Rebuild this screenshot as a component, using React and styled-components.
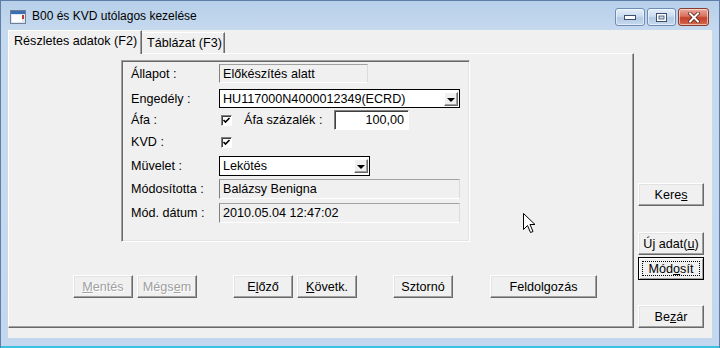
import React from "react";
import styled, { createGlobalStyle } from "styled-components";

const GlobalStyle = createGlobalStyle`
  html, body {
    margin: 0;
    padding: 0;
    background: #c4d9ef;
  }
  body {
    font-family: "Liberation Sans", Arial, sans-serif;
    font-size: 12.6px;
    color: #000;
  }
`;

const Window = styled.div`
  position: relative;
  width: 720px;
  height: 348px;
  box-sizing: border-box;
  background: linear-gradient(180deg, #b7cfe9 0px, #c6daef 30px, #c3d8ee 100%);
  border-left: 1px solid #5f7fa9;
  border-top: 1px solid #5f7fa9;
  border-right: 1px solid #5f7fa9;
  display: flex;
  flex-direction: column;
  overflow: hidden;
`;

const TitleBar = styled.div`
  height: 29px;
  display: flex;
  align-items: flex-start;
  padding-left: 9px;
  box-sizing: border-box;
`;

const AppIcon = styled.svg`
  margin-top: 9px;
  width: 16px;
  height: 14px;
  flex-shrink: 0;
`;

const Title = styled.div`
  margin-top: 8px;
  margin-left: 6px;
  flex: 1;
  font-size: 12px;
  color: #000;
  white-space: nowrap;
`;

const CaptionGroup = styled.div`
  display: flex;
  margin-top: 7px;
  margin-right: 10px;
  gap: 2px;
`;

const CaptionButton = styled.div`
  width: ${(p) => p.$w}px;
  height: 18px;
  box-sizing: border-box;
  border: 1px solid ${(p) => (p.$close ? "#8c3a2c" : "#6e8cb4")};
  border-radius: 3px;
  background: ${(p) =>
    p.$close
      ? "linear-gradient(180deg, #e9a99b 0%, #d7735e 45%, #c4412a 55%, #d26a4f 100%)"
      : "linear-gradient(180deg, #e4eef9 0%, #cbdcef 45%, #b4cae4 55%, #c6d9ee 100%)"};
  box-shadow: inset 0 0 0 1px rgba(255, 255, 255, 0.55);
  display: flex;
  align-items: center;
  justify-content: center;
`;

const Client = styled.div`
  margin: 0 7px;
  height: 308px;
  background: #f0f0f0;
  display: flex;
  flex-shrink: 0;
`;

const TabArea = styled.div`
  width: 626px;
  display: flex;
  flex-direction: column;
`;

const TabStrip = styled.div`
  height: 23px;
  display: flex;
  align-items: flex-end;
  position: relative;
  z-index: 1;
`;

const Tab = styled.div`
  box-sizing: border-box;
  width: ${(p) => p.$w}px;
  height: ${(p) => (p.$active ? 24 : 21)}px;
  margin-bottom: ${(p) => (p.$active ? -1 : 0)}px;
  background: #f0f0f0;
  border-top: 1px solid #fff;
  border-left: ${(p) => (p.$active ? "1px solid #fff" : "none")};
  border-right: 1px solid #696969;
  box-shadow: inset -1px 0 #a0a0a0;
  padding-left: 5px;
  padding-top: 3px;
  white-space: nowrap;
`;

const TabPanel = styled.div`
  height: 275px;
  box-sizing: border-box;
  border-top: 1px solid #fff;
  border-left: 1px solid #fff;
  border-right: 1px solid #696969;
  border-bottom: 1px solid #696969;
  box-shadow: inset -1px -1px #a0a0a0;
  display: flex;
  flex-direction: column;
`;

const GroupBox = styled.div`
  margin: 6px 0 0 112px;
  width: 349px;
  height: 182px;
  box-sizing: border-box;
  border: 1px solid;
  border-color: #a0a0a0 #fff #fff #a0a0a0;
  box-shadow: inset 1px 1px #696969, inset -1px -1px #e3e3e3;
  padding: 3px 0 0 9px;
`;

const Row = styled.div`
  display: flex;
  align-items: center;
  height: ${(p) => p.$h}px;
  margin-top: ${(p) => p.$mt}px;
`;

const Label = styled.div`
  box-sizing: border-box;
  width: ${(p) => p.$w || 88}px;
  padding-left: ${(p) => p.$pl || 0}px;
  flex-shrink: 0;
  white-space: nowrap;
`;

const ReadOnlyBox = styled.div`
  width: ${(p) => p.$w}px;
  height: 100%;
  box-sizing: border-box;
  border: 1px solid;
  border-color: #a0a0a0 #dcdcdc #fff #808080;
  padding-left: 3px;
  display: flex;
  align-items: center;
  white-space: nowrap;
`;

const Combo = styled.div`
  width: ${(p) => p.$w}px;
  height: 100%;
  box-sizing: border-box;
  background: #fff;
  border: 1px solid #000;
  padding-left: 3px;
  display: flex;
  align-items: center;
  justify-content: space-between;
  white-space: nowrap;
`;

const DropButton = styled.div`
  width: 14px;
  height: 14px;
  margin-right: 1px;
  box-sizing: border-box;
  background: #f0f0f0;
  border: 1px solid;
  border-color: #fff #696969 #696969 #fff;
  box-shadow: inset -1px -1px #a0a0a0;
  display: flex;
  align-items: center;
  justify-content: center;
`;

const Arrow = styled.div`
  width: 0;
  height: 0;
  border-left: 4px solid transparent;
  border-right: 4px solid transparent;
  border-top: 4px solid #000;
  margin-top: 2px;
`;

const Check = styled.div`
  width: 11px;
  height: 11px;
  margin-left: 2px;
  box-sizing: border-box;
  background: #fff;
  border: 1px solid;
  border-color: #808080 #fff #fff #808080;
  box-shadow: inset 1px 1px #404040;
  display: flex;
  align-items: center;
  justify-content: center;
  flex-shrink: 0;
`;

const NumberInput = styled.div`
  width: ${(p) => p.$w}px;
  height: 100%;
  box-sizing: border-box;
  background: #fff;
  border: 1px solid;
  border-color: #808080 #fff #fff #808080;
  box-shadow: inset 1px 1px #404040;
  padding-right: 4px;
  display: flex;
  align-items: center;
  justify-content: flex-end;
`;

const ButtonBar = styled.div`
  display: flex;
  margin-top: 33px;
  padding-left: 64px;
`;

const Button = styled.div`
  width: ${(p) => p.$w}px;
  height: 23px;
  margin-left: ${(p) => p.$ml || 0}px;
  margin-top: ${(p) => p.$mt || 0}px;
  box-sizing: border-box;
  background: #f0f0f0;
  border: 1px solid;
  border-color: ${(p) => (p.$default ? "#000" : "#fff #696969 #696969 #fff")};
  box-shadow: ${(p) =>
    p.$default
      ? "inset 1px 1px #fff, inset -1px -1px #a0a0a0"
      : "inset -1px -1px #a0a0a0, inset 1px 1px #e3e3e3"};
  color: ${(p) => (p.$disabled ? "#a0a0a0" : "#000")};
  text-shadow: ${(p) => (p.$disabled ? "1px 1px #fff" : "none")};
  display: flex;
  align-items: center;
  justify-content: center;
  white-space: nowrap;
  flex-shrink: 0;
  position: relative;
`;

const FocusRing = styled.div`
  position: absolute;
  inset: 3px;
  border: 1px dotted #000;
  pointer-events: none;
`;

const SideColumn = styled.div`
  display: flex;
  flex-direction: column;
  padding: 153px 0 0 4px;
`;

const BottomFrame = styled.div`
  height: 8px;
  flex-shrink: 0;
`;

const BottomEdge = styled.div`
  height: 2px;
  background: #3bbfe2;
  flex-shrink: 0;
`;

const Cursor = styled.svg`
  position: absolute;
  left: 522px;
  top: 212px;
  width: 13px;
  height: 21px;
`;

const Tick = () => (
  <svg width="9" height="9" viewBox="0 0 9 9">
    <path d="M1.5 4 L3.5 6 L7.5 2" fill="none" stroke="#000" strokeWidth="1.6" />
  </svg>
);

const Drop = () => (
  <DropButton>
    <Arrow />
  </DropButton>
);

export default function App() {
  return (
    <>
      <GlobalStyle />
      <Window>
        <TitleBar>
          <AppIcon viewBox="0 0 16 14">
            <rect x="0.5" y="0.5" width="15" height="13" fill="#dfe7f1" stroke="#6f7f95" />
            <rect x="1" y="1" width="14" height="3" fill="#3a6fb5" />
            <rect x="2" y="5" width="10" height="7" fill="#ffffff" />
            <rect x="12" y="5" width="2" height="4" fill="#c8342a" />
          </AppIcon>
          <Title>B00 és KVD utólagos kezelése</Title>
          <CaptionGroup>
            <CaptionButton $w={30}>
              <svg width="12" height="5" viewBox="0 0 12 5">
                <rect x="0.5" y="0.5" width="11" height="4" fill="#fff" stroke="#3b4f6b" />
              </svg>
            </CaptionButton>
            <CaptionButton $w={29}>
              <svg width="11" height="9" viewBox="0 0 11 9">
                <rect x="0.5" y="0.5" width="10" height="8" fill="#fff" stroke="#3b4f6b" />
                <rect x="3" y="3" width="5" height="3" fill="#cbdcef" stroke="#3b4f6b" strokeWidth="0.8" />
              </svg>
            </CaptionButton>
            <CaptionButton $w={31} $close>
              <svg width="12" height="11" viewBox="0 0 12 11">
                <path d="M2 1.5 L10 9.5 M10 1.5 L2 9.5" stroke="#5a1d14" strokeWidth="3.6" strokeLinecap="square" />
                <path d="M2 1.5 L10 9.5 M10 1.5 L2 9.5" stroke="#fff" strokeWidth="2" strokeLinecap="square" />
              </svg>
            </CaptionButton>
          </CaptionGroup>
        </TitleBar>

        <Client>
          <TabArea>
            <TabStrip>
              <Tab $active $w={134}>Részletes adatok (F2)</Tab>
              <Tab $w={83}>Táblázat (F3)</Tab>
            </TabStrip>
            <TabPanel>
              <GroupBox>
                <Row $h={19} $mt={0}>
                  <Label>Állapot :</Label>
                  <ReadOnlyBox $w={149}>Előkészítés alatt</ReadOnlyBox>
                </Row>
                <Row $h={19} $mt={6}>
                  <Label>Engedély :</Label>
                  <Combo $w={241}>
                    HU117000N4000012349(ECRD)
                    <Drop />
                  </Combo>
                </Row>
                <Row $h={20} $mt={2}>
                  <Label>Áfa :</Label>
                  <Check><Tick /></Check>
                  <Label $w={102} $pl={12}>Áfa százalék :</Label>
                  <NumberInput $w={75}>100,00</NumberInput>
                </Row>
                <Row $h={20} $mt={2}>
                  <Label>KVD :</Label>
                  <Check><Tick /></Check>
                </Row>
                <Row $h={20} $mt={4}>
                  <Label>Müvelet :</Label>
                  <Combo $w={151}>
                    Lekötés
                    <Drop />
                  </Combo>
                </Row>
                <Row $h={20} $mt={3}>
                  <Label>Módosította :</Label>
                  <ReadOnlyBox $w={241}>Balázsy Benigna</ReadOnlyBox>
                </Row>
                <Row $h={20} $mt={4}>
                  <Label>Mód. dátum :</Label>
                  <ReadOnlyBox $w={241}>2010.05.04 12:47:02</ReadOnlyBox>
                </Row>
              </GroupBox>
              <ButtonBar>
                <Button $w={60} $disabled><u>M</u>entés</Button>
                <Button $w={60} $ml={4} $disabled>Mégs<u>e</u>m</Button>
                <Button $w={60} $ml={36}>E<u>l</u>őző</Button>
                <Button $w={60} $ml={4}><u>K</u>övetk.</Button>
                <Button $w={60} $ml={36}>Sztornó</Button>
                <Button $w={107} $ml={37}>Feldolgozás</Button>
              </ButtonBar>
            </TabPanel>
          </TabArea>
          <SideColumn>
            <Button $w={66}>Kere<u>s</u></Button>
            <Button $w={66} $mt={26}>Új adat(<u>u</u>)</Button>
            <Button $w={66} $mt={2} $default>
              Mód<u>o</u>sít
              <FocusRing />
            </Button>
            <Button $w={66} $mt={25}>Be<u>z</u>ár</Button>
          </SideColumn>
        </Client>
        <BottomFrame />
        <BottomEdge />

        <Cursor viewBox="0 0 13 21">
          <path
            d="M0.5 0.5 L0.5 16.5 L4.5 12.5 L7.5 19.5 L10 18.5 L7 11.5 L12 11.5 Z"
            fill="#fff"
            stroke="#000"
            strokeWidth="1"
          />
        </Cursor>
      </Window>
    </>
  );
}
